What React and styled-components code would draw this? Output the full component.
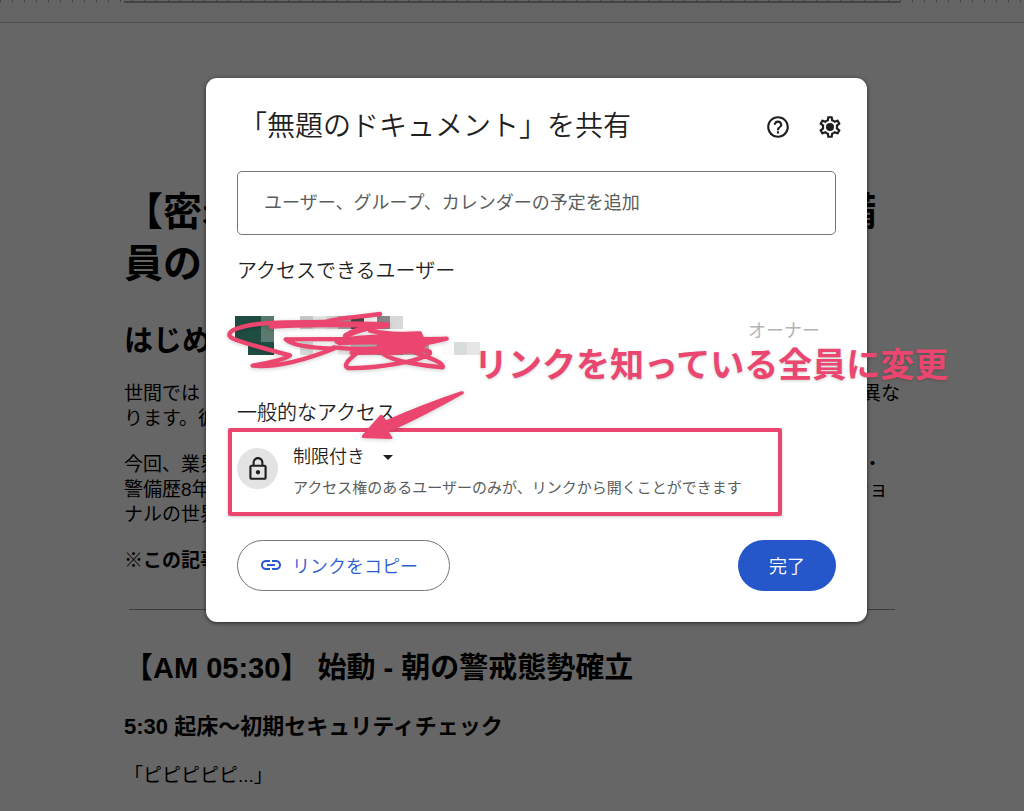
import React from 'react';
import styled, { createGlobalStyle } from 'styled-components';
import { MdHelpOutline, MdLink, MdLockOutline } from 'react-icons/md';

const PINK = '#ea466f';

const GlobalStyle = createGlobalStyle`
  * {
    box-sizing: border-box;
  }
  body {
    margin: 0;
    background: #666666;
    font-family: "Liberation Sans", "Noto Sans CJK JP", sans-serif;
  }
  h1, h2, h3, p {
    margin: 0;
  }
  button, input, select {
    font-family: inherit;
  }
`

const Page = styled('div')`
  position: relative;
  height: 100vh;
  overflow: hidden;
`

const Ruler = styled('div')`
  display: flex;
  justify-content: center;
  height: 23px;
  background: repeating-linear-gradient(90deg, #424242 0 1px, transparent 1px 12px) 0 0 / 100% 2px no-repeat, #646464;
  border-bottom: 1px solid #505050;
`

const RulerPage = styled('div')`
  width: 100%;
  max-width: 776px;
  height: 3px;
  border-bottom: 2px solid #424442;
`

const Document = styled('main')`
  max-width: 776px;
  margin: 0 auto;
  padding-top: 163px;
  color: #000;
`

const Line = styled('span')`
  display: flex;
  justify-content: space-between;
  padding-right: ${({ $end }) => $end || 0}px;
  white-space: nowrap;
`

const DocTitle = styled('h1')`
  font-size: 39px;
  line-height: 52px;
`

const DocHeading = styled('h2')`
  margin-top: ${({ $top }) => $top}px;
  font-size: 29px;
  line-height: 38px;
`

const DocSubheading = styled('h3')`
  margin-top: 25px;
  font-size: 22px;
  line-height: 30px;
`

const Paragraph = styled('p')`
  margin-top: 21px;
  font-size: 19px;
  line-height: 25px;
  font-weight: ${({ $bold }) => ($bold ? 700 : 400)};
`

const Divider = styled('hr')`
  height: 1px;
  margin: 36px 5px 0;
  border: 0;
  background: #3c3c3c;
`

const Overlay = styled('div')`
  position: absolute;
  inset: 0;
  display: flex;
  justify-content: center;
  align-items: flex-start;
  padding: 78px 0 0 49px;
`

const Dialog = styled('section')`
  position: relative;
  width: 100%;
  max-width: 661px;
  padding: 29px 31px 31px;
  border-radius: 11px;
  background: #fff;
  box-shadow: 0 1px 4px rgba(0, 0, 0, 0.6);
`

const DialogHeader = styled('header')`
  display: flex;
  align-items: center;
  gap: 26px;
  height: 40px;
  margin-right: -7px;
`

const DialogTitle = styled('h2')`
  flex: 1;
  padding-left: 2px;
  color: #1f1f1f;
  font-size: 28px;
  font-weight: 350;
  line-height: 40px;
`

const IconButton = styled('button')`
  display: flex;
  padding: 0;
  border: 0;
  background: none;
  color: #1f1f1f;
`

const PeopleInput = styled('input')`
  display: block;
  width: 100%;
  height: 64px;
  margin-top: 24px;
  padding: 0 26px;
  border: 1px solid #747775;
  border-radius: 5px;
  background: #fff;
  font-size: 18px;
  &::placeholder {
    color: #5a5d5c;
    opacity: 1;
  }
`

const SectionTitle = styled('h3')`
  margin-top: ${({ $top }) => $top}px;
  color: #1f1f1f;
  font-size: 20px;
  font-weight: 350;
  line-height: 30px;
`

const OwnerRow = styled('div')`
  display: flex;
  justify-content: space-between;
  align-items: center;
  height: 39px;
  margin: 30px 16px 0 -2px;
`

const OwnerRole = styled('span')`
  color: #b4b4b4;
  font-size: 18px;
  line-height: 24px;
  padding-bottom: 10px;
`

const AccessRow = styled('div')`
  display: flex;
  gap: 15px;
  margin-top: 15px;
`

const LockBadge = styled('div')`
  display: flex;
  align-items: center;
  justify-content: center;
  flex-shrink: 0;
  width: 41px;
  height: 41px;
  margin-top: 5px;
  border-radius: 50%;
  background: #e3e3e3;
  color: #1f1f1f;
`

const AccessSelectWrap = styled('label')`
  display: flex;
  align-items: center;
  gap: 18px;
  height: 28px;
`

const AccessSelect = styled('select')`
  appearance: none;
  padding: 0;
  border: 0;
  background: none;
  color: #1f1f1f;
  font-size: 18px;
  font-weight: 350;
  line-height: 28px;
`

const Caret = styled('span')`
  border: 5px solid transparent;
  border-top-color: #1f1f1f;
  border-bottom: 0;
`

const AccessHint = styled('p')`
  margin-top: 5px;
  color: #5a5d5c;
  font-size: 15px;
  line-height: 24px;
`

const DialogFooter = styled('footer')`
  display: flex;
  justify-content: space-between;
  margin-top: 40px;
`

const PillButton = styled('button')`
  display: flex;
  align-items: center;
  gap: ${({ $primary }) => ($primary ? 0 : 9)}px;
  height: 51px;
  padding: 0 31px 2px ${({ $primary }) => ($primary ? 31 : 21)}px;
  border: ${({ $primary }) => ($primary ? '0' : '1px solid #747775')};
  border-radius: 26px;
  background: ${({ $primary }) => ($primary ? '#2557cb' : '#fff')};
  color: ${({ $primary }) => ($primary ? '#fff' : '#2a5bd0')};
  font-size: 18px;
  font-weight: 350;
`

/* hand-drawn marks that lie over the dialog */
const HighlightBox = styled('div')`
  position: absolute;
  top: 350px;
  left: 22px;
  width: 554px;
  height: 88px;
  border: 4px solid ${PINK};
  border-radius: 2px;
  box-shadow: 0 1px 3px rgba(0, 0, 0, 0.2);
  pointer-events: none;
`

const Scribble = styled('svg')`
  position: absolute;
  top: 212px;
  left: 14px;
  pointer-events: none;
  filter: drop-shadow(0 1px 2px rgba(0, 0, 0, 0.2));
`

const Callout = styled('p')`
  position: absolute;
  top: 263px;
  left: 268px;
  color: ${PINK};
  font-size: 34px;
  font-weight: 700;
  line-height: 48px;
  white-space: nowrap;
  text-shadow: 0 1px 3px rgba(0, 0, 0, 0.2);
`

const GearIcon = () => (
  <svg width="26" height="26" viewBox="0 0 24 24" fill="currentColor">
    <path d="M19.43 12.98c.04-.32.07-.64.07-.98 0-.34-.03-.66-.07-.98l2.11-1.65c.19-.15.24-.42.12-.64l-2-3.46c-.09-.16-.26-.25-.44-.25-.06 0-.12.01-.17.03l-2.49 1c-.52-.4-1.08-.73-1.69-.98l-.38-2.65C14.46 2.18 14.25 2 14 2h-4c-.25 0-.46.18-.49.42l-.38 2.65c-.61.25-1.17.59-1.69.98l-2.49-1c-.06-.02-.12-.03-.18-.03-.17 0-.34.09-.43.25l-2 3.46c-.13.22-.07.49.12.64l2.11 1.65c-.04.32-.07.65-.07.98 0 .33.03.66.07.98l-2.11 1.65c-.19.15-.24.42-.12.64l2 3.46c.09.16.26.25.44.25.06 0 .12-.01.17-.03l2.49-1c.52.4 1.08.73 1.69.98l.38 2.65c.03.24.24.42.49.42h4c.25 0 .46-.18.49-.42l.38-2.65c.61-.25 1.17-.59 1.69-.98l2.49 1c.06.02.12.03.18.03.17 0 .34-.09.43-.25l2-3.46c.12-.22.07-.49-.12-.64l-2.11-1.65zm-1.98-1.71c.04.31.05.52.05.73 0 .21-.02.43-.05.73l-.14 1.13.89.7 1.08.84-.7 1.21-1.27-.51-1.04-.42-.9.68c-.43.32-.84.56-1.25.73l-1.06.43-.16 1.13-.2 1.35h-1.4l-.19-1.35-.16-1.13-1.06-.43c-.43-.18-.83-.41-1.23-.71l-.91-.7-1.06.43-1.27.51-.7-1.21 1.08-.84.89-.7-.14-1.13c-.03-.31-.05-.54-.05-.74s.02-.43.05-.73l.14-1.13-.89-.7-1.08-.84.7-1.21 1.27.51 1.04.42.9-.68c.43-.32.84-.56 1.25-.73l1.06-.43.16-1.13.2-1.35h1.39l.19 1.35.16 1.13 1.06.43c.43.18.83.41 1.23.71l.91.7 1.06-.43 1.27-.51.7 1.21-1.07.85-.89.7.14 1.13z" />
    <circle cx="12" cy="12" r="3.7" />
  </svg>
)

const MOSAIC = [
  [46, 77, 77, 78, '#1f4d42'],
  [123, 77, 39, 78, '#5a7a70'],
  [84, 155, 78, 39, '#1f4d42'],
  [240, 77, 39, 39, '#cacaca'],
  [279, 77, 39, 39, '#e6e6e6'],
  [318, 77, 38, 39, '#d6d6d6'],
  [356, 77, 38, 39, '#a8a8a8'],
  [394, 77, 39, 39, '#4a4a4a'],
  [472, 77, 38, 39, '#8a8a8a'],
  [510, 77, 39, 39, '#d8d8d8'],
  [240, 155, 39, 39, '#dcdcdc'],
  [356, 155, 38, 39, '#ececec'],
  [394, 155, 78, 39, '#c4c4c4'],
  [472, 155, 77, 39, '#808484'],
  [549, 155, 78, 39, '#b4b8b8'],
  [666, 155, 38, 39, '#fbfbfb'],
  [704, 155, 39, 39, '#d8dcdb'],
  [743, 155, 38, 39, '#e6e6e6'],
]

const MaskedUser = () => (
  <svg width="245" height="39" viewBox="46 77 735 117" shapeRendering="crispEdges">
    {MOSAIC.map(([x, y, w, h, fill]) => (
      <rect key={`${x}-${y}`} x={x} y={y} width={w} height={h} fill={fill} />
    ))}
  </svg>
)

const Marks = () => (
  <Scribble width="270" height="170" viewBox="0 0 810 510">
    <g fill="none" stroke={PINK} strokeWidth="13" strokeLinecap="round" strokeLinejoin="round">
      <path d="M480 72C430 80 360 82 315 96C240 98 130 92 62 112C24 122 20 138 40 146C90 166 160 182 210 196C190 212 130 220 98 227C180 234 270 204 340 176" />
      <path d="M340 176C280 174 215 166 197 148C330 146 560 150 680 146C600 166 470 186 340 172" />
      <path d="M155 108C230 102 400 102 500 105C440 112 400 122 378 138" strokeWidth="18" />
      <path d="M450 122C520 138 560 130 600 130C570 142 400 134 350 155C430 160 560 154 620 160C600 178 480 190 395 188" strokeWidth="13" />
      <path d="M360 155L600 142M480 172L604 168" strokeWidth="22" />
      <path d="M412 188C390 206 366 226 384 234C470 236 600 214 630 190C632 174 580 184 490 192C520 214 610 228 668 232C674 218 620 200 580 186" />
    </g>
    <path
      d="M723 304Q734 302 731 311Q620 374 507 426L518 444Q516 448 510 447L428 444Q423 440 428 434L480 376Q485 371 489 378L498 391Q610 342 723 304Z"
      fill={PINK}
    />
  </Scribble>
)

const ShareDialog = () => (
  <Dialog role="dialog" aria-labelledby="share-title">
    <DialogHeader>
      <DialogTitle id="share-title">「無題のドキュメント」を共有</DialogTitle>
      <IconButton type="button"><MdHelpOutline size={26} /></IconButton>
      <IconButton type="button"><GearIcon /></IconButton>
    </DialogHeader>
    <PeopleInput
      type="text"
      aria-labelledby="share-title"
      placeholder="ユーザー、グループ、カレンダーの予定を追加"
    />
    <SectionTitle $top={21}>アクセスできるユーザー</SectionTitle>
    <OwnerRow>
      <MaskedUser />
      <OwnerRole>オーナー</OwnerRole>
    </OwnerRow>
    <SectionTitle $top={43} id="general-access">一般的なアクセス</SectionTitle>
    <AccessRow>
      <LockBadge><MdLockOutline size={26} /></LockBadge>
      <div>
        <AccessSelectWrap>
          <AccessSelect aria-labelledby="general-access">
            <option>制限付き</option>
          </AccessSelect>
          <Caret />
        </AccessSelectWrap>
        <AccessHint>アクセス権のあるユーザーのみが、リンクから開くことができます</AccessHint>
      </div>
    </AccessRow>
    <DialogFooter>
      <PillButton type="button"><MdLink size={24} />リンクをコピー</PillButton>
      <PillButton type="button" $primary>完了</PillButton>
    </DialogFooter>
    <HighlightBox />
    <Marks />
    <Callout>リンクを知っている全員に変更</Callout>
  </Dialog>
)

export default function App() {
  return (
    <>
      <GlobalStyle />
      <Page>
        <Ruler><RulerPage /></Ruler>
        <Document>
          <DocTitle>
            <Line $end={24}><span>【密着</span><span>備</span></Line>
            <Line>員のリ</Line>
          </DocTitle>
          <DocHeading $top={32}>はじめに</DocHeading>
          <Paragraph>
            <Line><span>世間では</span><span>異な</span></Line>
            <Line>ります。彼</Line>
          </Paragraph>
          <Paragraph>
            <Line $end={18}><span>今回、業界</span><span>・</span></Line>
            <Line $end={12}><span>警備歴8年</span><span>ショ</span></Line>
            <Line>ナルの世界</Line>
          </Paragraph>
          <Paragraph $bold>※この記事</Paragraph>
          <Divider />
          <DocHeading $top={39}>【AM 05:30】 始動 - 朝の警戒態勢確立</DocHeading>
          <DocSubheading>5:30 起床〜初期セキュリティチェック</DocSubheading>
          <Paragraph>「ピピピピピ...」</Paragraph>
        </Document>
        <Overlay>
          <ShareDialog />
        </Overlay>
      </Page>
    </>
  )
}
